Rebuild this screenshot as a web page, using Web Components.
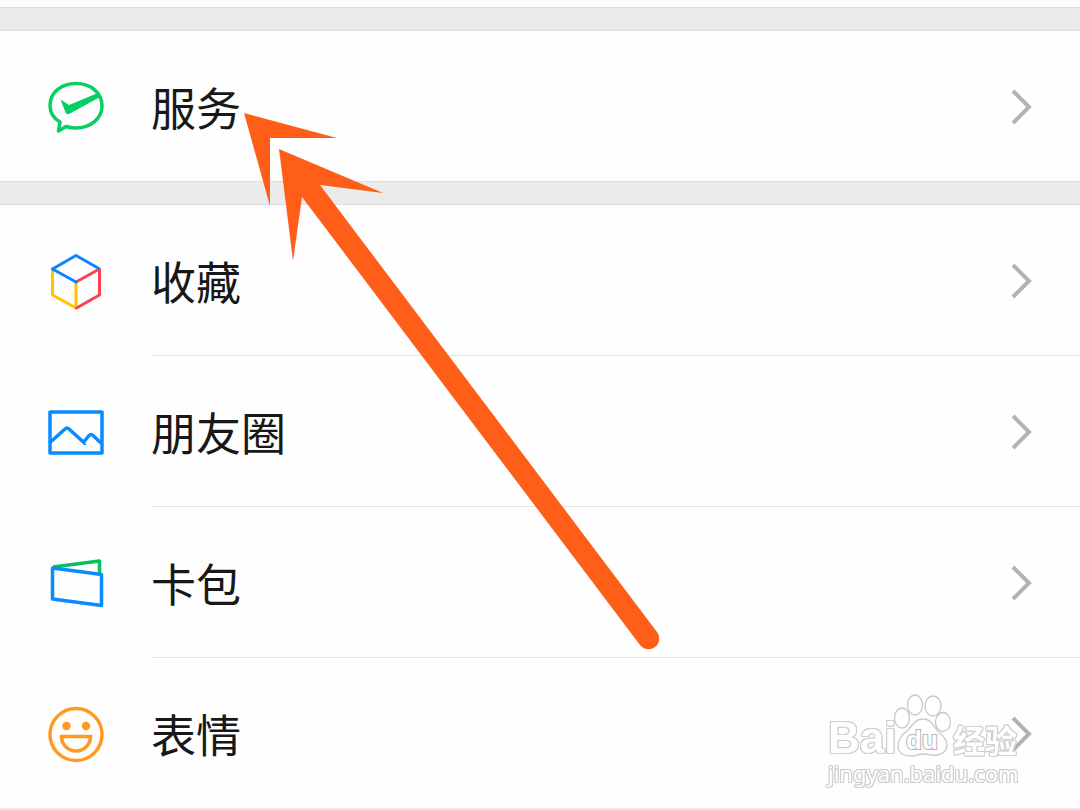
<!DOCTYPE html>
<html lang="zh-CN">
<head>
<meta charset="utf-8">
<meta name="viewport" content="width=device-width, initial-scale=1">
<title>我</title>
<style>
body { margin: 0; background: #fefefe; font-family: "Noto Sans CJK SC", sans-serif; color: #181818; }
</style>
</head>
<body>
<settings-page></settings-page>
<script>
const ICONS = {
  service: `<g fill="none" stroke="#07cf62" stroke-width="3.500" stroke-linejoin="round"><path d="M12 42C5 38 2 32 2 25.500C2 12.500 13 3.500 28 3.500S54 13 54 26S42 48 28 48C24 48 21 47.500 18 46.500L10.500 51L12 42Z"/></g><path d="M12.500 19.500L21 25L51 12.500L53 16.500L22 33.500C20 34.500 18.500 34.500 17.500 32.500Z" fill="#07cf62"/>`,
  favorites: `<g fill="none" stroke-width="3" stroke-linecap="round" stroke-linejoin="round"><path d="M4.500 15V41L28 54V28.500" stroke="#ffc300"/><path d="M28 28L51.500 15V41L28.500 54" stroke="#fa4350"/><path d="M50 14L28 1.500L4.500 15L28 28" stroke="#0a85ff"/></g>`,
  moments: `<g fill="none" stroke="#0a8bff" stroke-width="3.500" stroke-linejoin="round"><rect x="2" y="7" width="52" height="41"/><path d="M2 37.500L17 24Q19 22 21 24L37 38.500M35 38L41 30.500Q43 28.500 45 30.500L53 38"/></g><path d="M33 35L39 40H36Z" fill="#0a8bff"/>`,
  cards: `<g fill="none" stroke-width="3.500" stroke-linejoin="round"><path d="M5 11L51.500 5V17" stroke="#07c160"/><path d="M4.500 12L53.500 18.500V49.500L4.500 43Z" stroke="#0a8bff"/></g>`,
  stickers: `<g fill="none" stroke="#ff9a1f" stroke-width="3.500"><circle cx="28" cy="27.500" r="26"/><path d="M13.500 29.500H42.500A14.500 14.500 0 0 1 13.500 29.500Z"/></g><g fill="#ff9a1f"><circle cx="18.500" cy="19" r="4.200"/><circle cx="38" cy="19" r="4.200"/></g>`
};
function define(name, html) {
  customElements.define(name, class extends HTMLElement {
    constructor() {
      super();
      this.attachShadow({ mode: "open" }).innerHTML = html;
    }
  });
}
customElements.define("menu-icon", class extends HTMLElement {
  connectedCallback() {
    if (this.shadowRoot) return;
    this.attachShadow({ mode: "open" }).innerHTML = `
      <style>:host { display: block; width: 55px; height: 55px; } svg { display: block; overflow: visible; }</style>
      <svg width="55" height="55" viewBox="0 0 55 55" aria-hidden="true">${ICONS[this.getAttribute("name")] || ""}</svg>`;
  }
});
define("menu-row", `
  <style>
    :host { display: block; }
    a { display: grid; grid-template-columns: 55px 1fr; column-gap: 48px; padding-left: 48px; color: inherit; text-decoration: none; }
    .icon { padding-top: 49px; }
    .body { display: flex; align-items: center; justify-content: space-between; padding: 44px 48px 42px 0; border-bottom: 1px solid #e3e3e3; }
    :host([last]) .body { border-bottom: 0; }
    .label { font-size: 45px; line-height: 64px; }
    svg { display: block; }
  </style>
  <a href="#"><span class="icon"><slot name="icon"></slot></span>
    <span class="body"><span class="label"><slot></slot></span>
      <svg width="21" height="36" viewBox="0 0 21 36" fill="none" stroke="#b2b2b2" stroke-width="4" aria-hidden="true"><path d="M2 2L18 18L2 34"/></svg>
    </span>
  </a>`);
define("menu-group", `
  <style>
    :host { display: block; }
    nav::before { content: ""; display: block; height: 22px; background: #ebebeb; border: solid #dedede; border-width: 1px 0; }
  </style>
  <nav><slot></slot></nav>`);
define("pointer-arrow", `
  <style>:host { position: absolute; left: 240px; top: 105px; pointer-events: none; } svg { display: block; }</style>
  <svg width="430" height="555" viewBox="240 105 430 555" fill="#ff5e19" aria-hidden="true">
    <path d="M244 113L337 138H270V206Z"/>
    <path d="M279 149L383 193L320 185L657 632A10.500 10.500 0 0 1 640 645L302 197L293 261Z"/>
  </svg>`);
define("site-watermark", `
  <style>
    :host { position: absolute; right: 56px; bottom: 20px; width: 196px; color: #fff; pointer-events: none; }
    .brand { display: flex; align-items: flex-end; height: 64px; }
    .text { white-space: nowrap; filter: drop-shadow(1px 0 0 #d0d0d0) drop-shadow(-1px 0 0 #d0d0d0) drop-shadow(0 1px 0 #d0d0d0) drop-shadow(0 -1px 0 #d0d0d0); }
    .bai { font: bold 44px/40px "Liberation Sans", sans-serif; width: 65px; }
    .paw { display: block; width: 60px; height: 64px; overflow: visible; }
    .cn { font: bold 32px/38px "Noto Sans CJK SC", sans-serif; }
    .site { font: 22px/30px "Noto Sans", sans-serif; }
    .du { font: bold 26px "Liberation Sans", sans-serif; fill: #fff; stroke: #b4b4b4; stroke-width: 2px; paint-order: stroke; }
  </style>
  <div class="brand">
    <span class="text bai">Bai</span>
    <svg class="paw" viewBox="0 0 60 64" fill="#fff" stroke="#c8c8c8" stroke-width="1.300">
      <ellipse cx="9" cy="24" rx="7.500" ry="10"/><ellipse cx="22" cy="11" rx="7.500" ry="10"/><ellipse cx="40" cy="12" rx="8" ry="10"/><ellipse cx="50" cy="28" rx="7.500" ry="9.500"/>
      <path d="M30 25C22 25 20 31 15 36C9 41 5 45 5 52C5 59 11 62 18 62C23 62 25 60 30 60S40 62 44 61C50 60 54 57 54 51C54 45 49 41 44 36C39 30 38 25 30 25Z"/>
      <text class="du" x="13" y="55">du</text>
    </svg>
    <span class="text cn">经验</span>
  </div>
  <div class="text site">jingyan.baidu.com</div>`);
define("settings-page", `
  <style>
    :host { display: block; position: relative; padding-top: 7px; border-bottom: 2px solid #e8e8e8; }
  </style>
  <menu-group>
    <menu-row last><menu-icon slot="icon" name="service"></menu-icon>服务</menu-row>
  </menu-group>
  <menu-group>
    <menu-row><menu-icon slot="icon" name="favorites"></menu-icon>收藏</menu-row>
    <menu-row><menu-icon slot="icon" name="moments"></menu-icon>朋友圈</menu-row>
    <menu-row><menu-icon slot="icon" name="cards"></menu-icon>卡包</menu-row>
    <menu-row last><menu-icon slot="icon" name="stickers"></menu-icon>表情</menu-row>
  </menu-group>
  <site-watermark></site-watermark>
  <pointer-arrow></pointer-arrow>`);
</script>
</body>
</html>
